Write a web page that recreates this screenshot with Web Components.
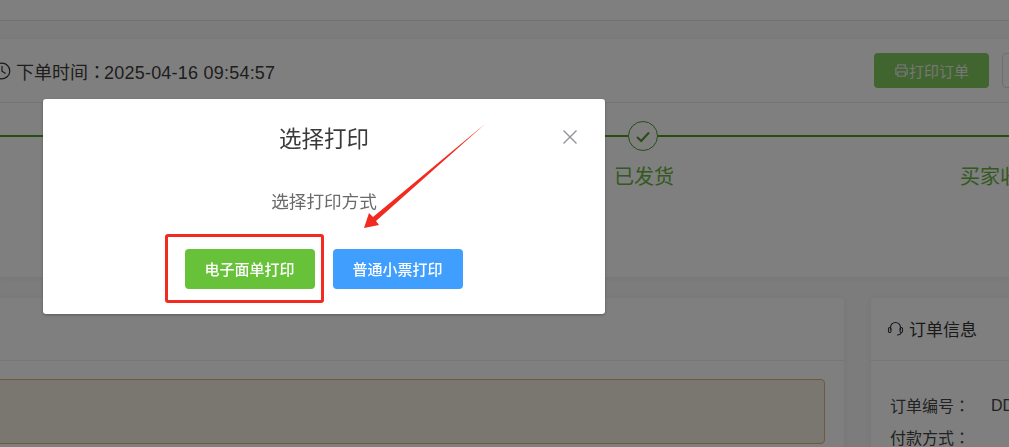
<!DOCTYPE html>
<html lang="zh">
<head>
<meta charset="utf-8">
<title>订单详情</title>
<style>
  html, body { margin: 0; height: 100%; overflow: hidden; background: #f8f8f8; }
  body { font-family: "Liberation Sans", "Noto Sans CJK SC", sans-serif; color: #333; }
</style>
</head>
<body>
<order-page>
  <order-head slot="head"></order-head>
  <order-steps slot="head"></order-steps>
</order-page>
<print-modal title-text="选择打印" message="选择打印方式"></print-modal>

<script>
const cardStyle = `
    background: #fff;
    border-radius: 4px;
    box-shadow: 0 1px 6px rgba(0, 0, 0, .06);
`
// the full-width colon sits centred in the TC face, as it does in the reference
const colon = `<span lang="zh-Hant" style="font-family: 'Noto Sans CJK TC', sans-serif">：</span>`
class OrderHead extends HTMLElement {
    constructor() {
        super();
        this.attachShadow({ mode: 'open' })
    }
    connectedCallback() {
        this.shadowRoot.innerHTML = `
            <style>
                :host { display: flex; align-items: center; height: 63px; border-bottom: 1px solid #e8e8e8; }
                .time { display: flex; align-items: center; gap: 5px; margin-left: -7px; font-size: 18px; color: #3c3c3c; flex: 1; white-space: nowrap; }
                .time svg { flex: none; }
                .date { letter-spacing: .22px; margin-left: -2px; }
                button { font: inherit; font-size: 15px; height: 35px; border-radius: 4px; box-sizing: border-box; padding: 0; }
                .print { width: 115px; margin-right: 13px; background: #82ca5c; color: #ececec; border: 0; display: flex; align-items: center; justify-content: center; gap: 0; }
                .other { width: 60px; flex: none; margin-right: -53px; background: #fff; border: 1px solid #ddd; }
            </style>
            <span class="time">
                <svg width="18" height="18" viewBox="0 0 18 18" fill="none" stroke="#333" stroke-width="1.2"><circle cx="9" cy="9" r="7.8"/><path d="M9 4v5.2l3.6 2.4"/></svg>
                <span>下单时间${colon}<span class="date">2025-04-16 09:54:57</span></span>
            </span>
            <button class="print">
                <svg width="15" height="15" viewBox="0 0 16 16" fill="none" stroke="#e6e6e6" stroke-width="1.4"><path d="M4 5V2h8v3M4 12H2V5.5h12V12h-2"/><path d="M4 9.500h8V14H4z"/></svg>
                <span>打印订单</span>
            </button>
            <button class="other"></button>
        `
    }
}
class OrderSteps extends HTMLElement {
    constructor() {
        super();
        this.attachShadow({ mode: 'open' })
    }
    connectedCallback() {
        this.shadowRoot.innerHTML = `
            <style>
                :host { display: block; height: 174px; padding-top: 18px; box-sizing: border-box; }
                .track { display: flex; align-items: center; height: 30px; }
                .bar { height: 2px; background: #4f9a2a; }
                .bar.a { width: 628px; }
                .bar.b { flex: 1; }
                .dot { width: 28px; height: 28px; border: 1px solid #4f9a2a; border-radius: 50%; flex: none; display: flex; align-items: center; justify-content: center; }
                .labels { display: flex; margin-top: 14px; font-size: 20px; color: #67b23f; line-height: 24px; white-space: nowrap; }
                .labels span:first-child { margin-left: 614px; }
                .labels span:last-child { margin-left: 286px; }
            </style>
            <div class="track">
                <div class="bar a"></div>
                <div class="dot"><svg width="16" height="13" viewBox="0 0 16 13" fill="none" stroke="#4f9a2a" stroke-width="2"><path d="M2 7l4.200 4L14 2.500"/></svg></div>
                <div class="bar b"></div>
            </div>
            <div class="labels"><span>已发货</span><span>买家收货</span></div>
        `
    }
}
class OrderPage extends HTMLElement {
    constructor() {
        super();
        this.attachShadow({ mode: 'open' })
    }
    connectedCallback() {
        this.shadowRoot.innerHTML = `
            <style>
                :host { display: block; width: 1009px; height: 447px; overflow: hidden; }
                .strip { height: 20px; background: #fff; border-bottom: 1px solid #e4e4e4; }
                .head { margin: 18px 0 0; height: 238px; ${cardStyle} border-radius: 0; }
                .row { display: flex; gap: 27px; margin: 21px -40px 0 -40px; }
                .panel { ${cardStyle} height: 200px; box-sizing: border-box; }
                .main { width: 884px; flex: none; }
                .side { flex: 1; }
                .title { height: 63px; padding-bottom: 2px; border-bottom: 1px solid #ececec; display: flex; align-items: center; box-sizing: border-box; font-size: 17px; color: #333; gap: 5px; padding-left: 16px; }
                .alert { margin: 18px 19px 0 0; height: 65px; box-sizing: border-box; background: #f5ece0; border: 1px solid #d9b47a; border-radius: 4px; }
                .info { padding: 29px 0 0 19px; font-size: 16px; line-height: 31px; color: #444; }
                .info div { display: flex; white-space: nowrap; }
                .info b { font-weight: 400; width: 101px; flex: none; }
            </style>
            <div class="strip"></div>
            <div class="head"><slot name="head"></slot></div>
            <div class="row">
                <section class="panel main">
                    <div class="title"></div>
                    <div class="alert"></div>
                </section>
                <section class="panel side">
                    <div class="title">
                        <svg width="17" height="17" viewBox="0 0 17 17" fill="none" stroke="#333" stroke-width="1.1"><path d="M3.500 10V7.500a5 5 0 0 1 10 0V10"/><rect x="1.500" y="7.500" width="2.500" height="5" rx="1.200"/><rect x="13" y="7.500" width="2.500" height="5" rx="1.200"/><path d="M14 12.500c0 1.800-1.600 2.500-4 2.500"/></svg>
                        <span>订单信息</span>
                    </div>
                    <div class="info">
                        <div><b>订单编号${colon}</b><span>DD</span></div>
                        <div><b>付款方式${colon}</b></div>
                    </div>
                </section>
            </div>
        `
    }
}
class PrintModal extends HTMLElement {
    constructor() {
        super();
        this.attachShadow({ mode: 'open' })
    }
    connectedCallback() {
        this.shadowRoot.innerHTML = `
            <style>
                :host { position: fixed; inset: 0; display: block; background: rgba(0, 0, 0, .5); padding: 99px 0 0 43px; box-sizing: border-box; }
                .dialog { position: relative; width: 562px; height: 215px; box-sizing: border-box; background: #fff; border-radius: 3px; box-shadow: 0 1px 3px rgba(0, 0, 0, .3); padding-top: 26px; text-align: center; }
                h2 { margin: 0; font-size: 22.500px; font-weight: 400; line-height: 30px; color: #3a3a3a; }
                p { margin: 35px 0 0; font-size: 17.600px; line-height: 24px; color: #6a6a6a; }
                .close { position: absolute; top: 30px; right: 27px; width: 16px; height: 16px; }
                .actions { display: flex; justify-content: center; gap: 18px; margin-top: 35px; padding-right: 1px; }
                .btn { width: 130px; height: 40px; border: 0; border-radius: 4px; padding: 0 0 2px; color: #fff; font: 500 15px "Liberation Sans", "Noto Sans CJK SC", sans-serif; }
                .green { background: #67c23a; }
                .blue { background: #409eff; }
                .box { position: absolute; left: 122px; top: 135px; width: 159px; height: 69px; box-sizing: border-box; border: 3px solid #f32a20; border-radius: 3px; }
                .arrow { position: absolute; left: 0; top: 0; overflow: visible; pointer-events: none; }
            </style>
            <div class="dialog">
                <h2>${this.getAttribute('title-text')}</h2>
                <svg class="close" viewBox="0 0 16 16" stroke="#909399" stroke-width="1.4"><path d="M1.500 1.500l13 13M14.500 1.500l-13 13"/></svg>
                <p>${this.getAttribute('message')}</p>
                <div class="actions">
                    <button class="btn green">电子面单打印</button>
                    <button class="btn blue">普通小票打印</button>
                </div>
                <div class="box"></div>
                <svg class="arrow" width="562" height="215"><polygon points="442,25 333,122 336,126 321,129 326,114 330,118" fill="#f32a20"/></svg>
            </div>
        `
    }
}
window.customElements.define('order-head', OrderHead)
window.customElements.define('order-steps', OrderSteps)
window.customElements.define('order-page', OrderPage)
window.customElements.define('print-modal', PrintModal)
</script>
</body>
</html>
